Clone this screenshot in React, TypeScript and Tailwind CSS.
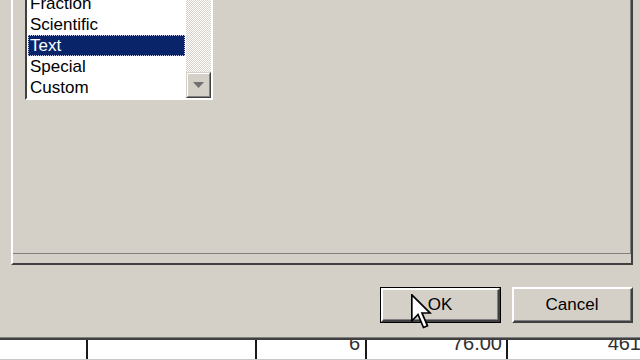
const font = "font-['Liberation_Sans',Arial,sans-serif]";

const rows = ["Fraction", "Scientific", "Text", "Special", "Custom"];

const Win2kButton = ({ label, isDefault }: { label: string; isDefault?: boolean }) => (
  <div className={`h-[36px] w-[121px] ${isDefault ? "border border-black" : ""}`}>
    <div className="h-full w-full border-t-2 border-l-2 border-t-white border-l-white border-r-2 border-b-2 border-r-[#404040] border-b-[#404040]">
      <div className="flex h-full w-full items-center justify-center border-r border-b border-r-[#808080] border-b-[#808080] text-[17px] text-black">
        {label}
      </div>
    </div>
  </div>
);

const Cursor = () => (
  <svg
    className="absolute left-[411px] top-[294px]"
    width="22"
    height="36"
    viewBox="0 0 22 36"
  >
    <polygon
      points="0.8,0.8 0.8,27 7,20.5 12.5,33.5 16.5,31.8 11,19 19,19"
      fill="white"
      stroke="black"
      strokeWidth="1.7"
      strokeLinejoin="miter"
    />
  </svg>
);

export default function App() {
  return (
    <div className={`relative flex h-[360px] w-[640px] flex-col overflow-hidden bg-[#d4d0c8] ${font}`}>
      {/* tab panel */}
      <div className="ml-[11px] h-[265px] w-[622px] shrink-0 border-l-2 border-l-white border-r-2 border-b-2 border-r-[#404040] border-b-[#404040]">
        <div className="h-full w-full border-r border-b border-r-[#808080] border-b-[#808080]">
          {/* category list */}
          <div className="ml-[12px] mt-[-9px] flex h-[109px] w-[188px] border-t-2 border-l-2 border-t-[#404040] border-l-[#404040] border-b-2 border-r-2 border-b-white border-r-white bg-white">
            <div className="flex w-[159px] flex-col">
              {rows.map((r) => (
                <div key={r} className="h-[21px] px-[1px]">
                  <div
                    className={`h-[21px] pl-[2px] pt-[1px] text-[17px] leading-[20px] ${
                      r === "Text"
                        ? "bg-[#0a246a] text-white outline outline-1 outline-dotted outline-offset-[-1px] outline-[#c8c8e8]"
                        : "text-black"
                    }`}
                  >
                    {r}
                  </div>
                </div>
              ))}
            </div>
            <div className="flex w-[25px] flex-col justify-end bg-[repeating-conic-gradient(#ffffff_0_25%,#d4d0c8_0_50%)] bg-[length:2px_2px]">
              <div className="h-[26px] w-[25px] border-t border-l border-t-[#d4d0c8] border-l-[#d4d0c8] border-b border-r border-b-[#404040] border-r-[#404040] bg-[#d4d0c8]">
                <div className="flex h-full w-full items-center justify-center border-t border-l border-t-white border-l-white border-b border-r border-b-[#808080] border-r-[#808080]">
                  <svg width="11" height="6" viewBox="0 0 11 6">
                    <polygon points="0,0 11,0 5.5,6" fill="#707070" />
                  </svg>
                </div>
              </div>
            </div>
          </div>
        </div>
      </div>

      {/* dialog buttons */}
      <div className="flex h-[72px] shrink-0 justify-end gap-[11px] pt-[22px] pr-[7px]">
        <Win2kButton label="OK" isDefault />
        <Win2kButton label="Cancel" />
      </div>

      {/* dialog bottom edge */}
      <div className="h-[3px] shrink-0 border-t border-t-[#808080] bg-[#404040]" />

      {/* worksheet row behind */}
      <div className="flex h-[20px] w-[645px] shrink-0 border-b border-b-[#c8c8c8] bg-white text-[20px] leading-[20px] text-[#303030]">
        <div className="w-[88px] border-r-2 border-r-[#1a1a1a]" />
        <div className="w-[169px] border-r-2 border-r-[#1a1a1a]" />
        <div className="w-[110px] overflow-hidden border-r-2 border-r-[#1a1a1a] pr-[5px] text-right">
          <div className="mt-[-7px]">6</div>
        </div>
        <div className="w-[141px] overflow-hidden border-r-2 border-r-[#1a1a1a] pr-[4px] text-right">
          <div className="mt-[-7px]">76.00</div>
        </div>
        <div className="w-[137px] overflow-hidden pr-[4px] text-right">
          <div className="mt-[-7px]">461</div>
        </div>
      </div>

      <Cursor />
    </div>
  );
}
